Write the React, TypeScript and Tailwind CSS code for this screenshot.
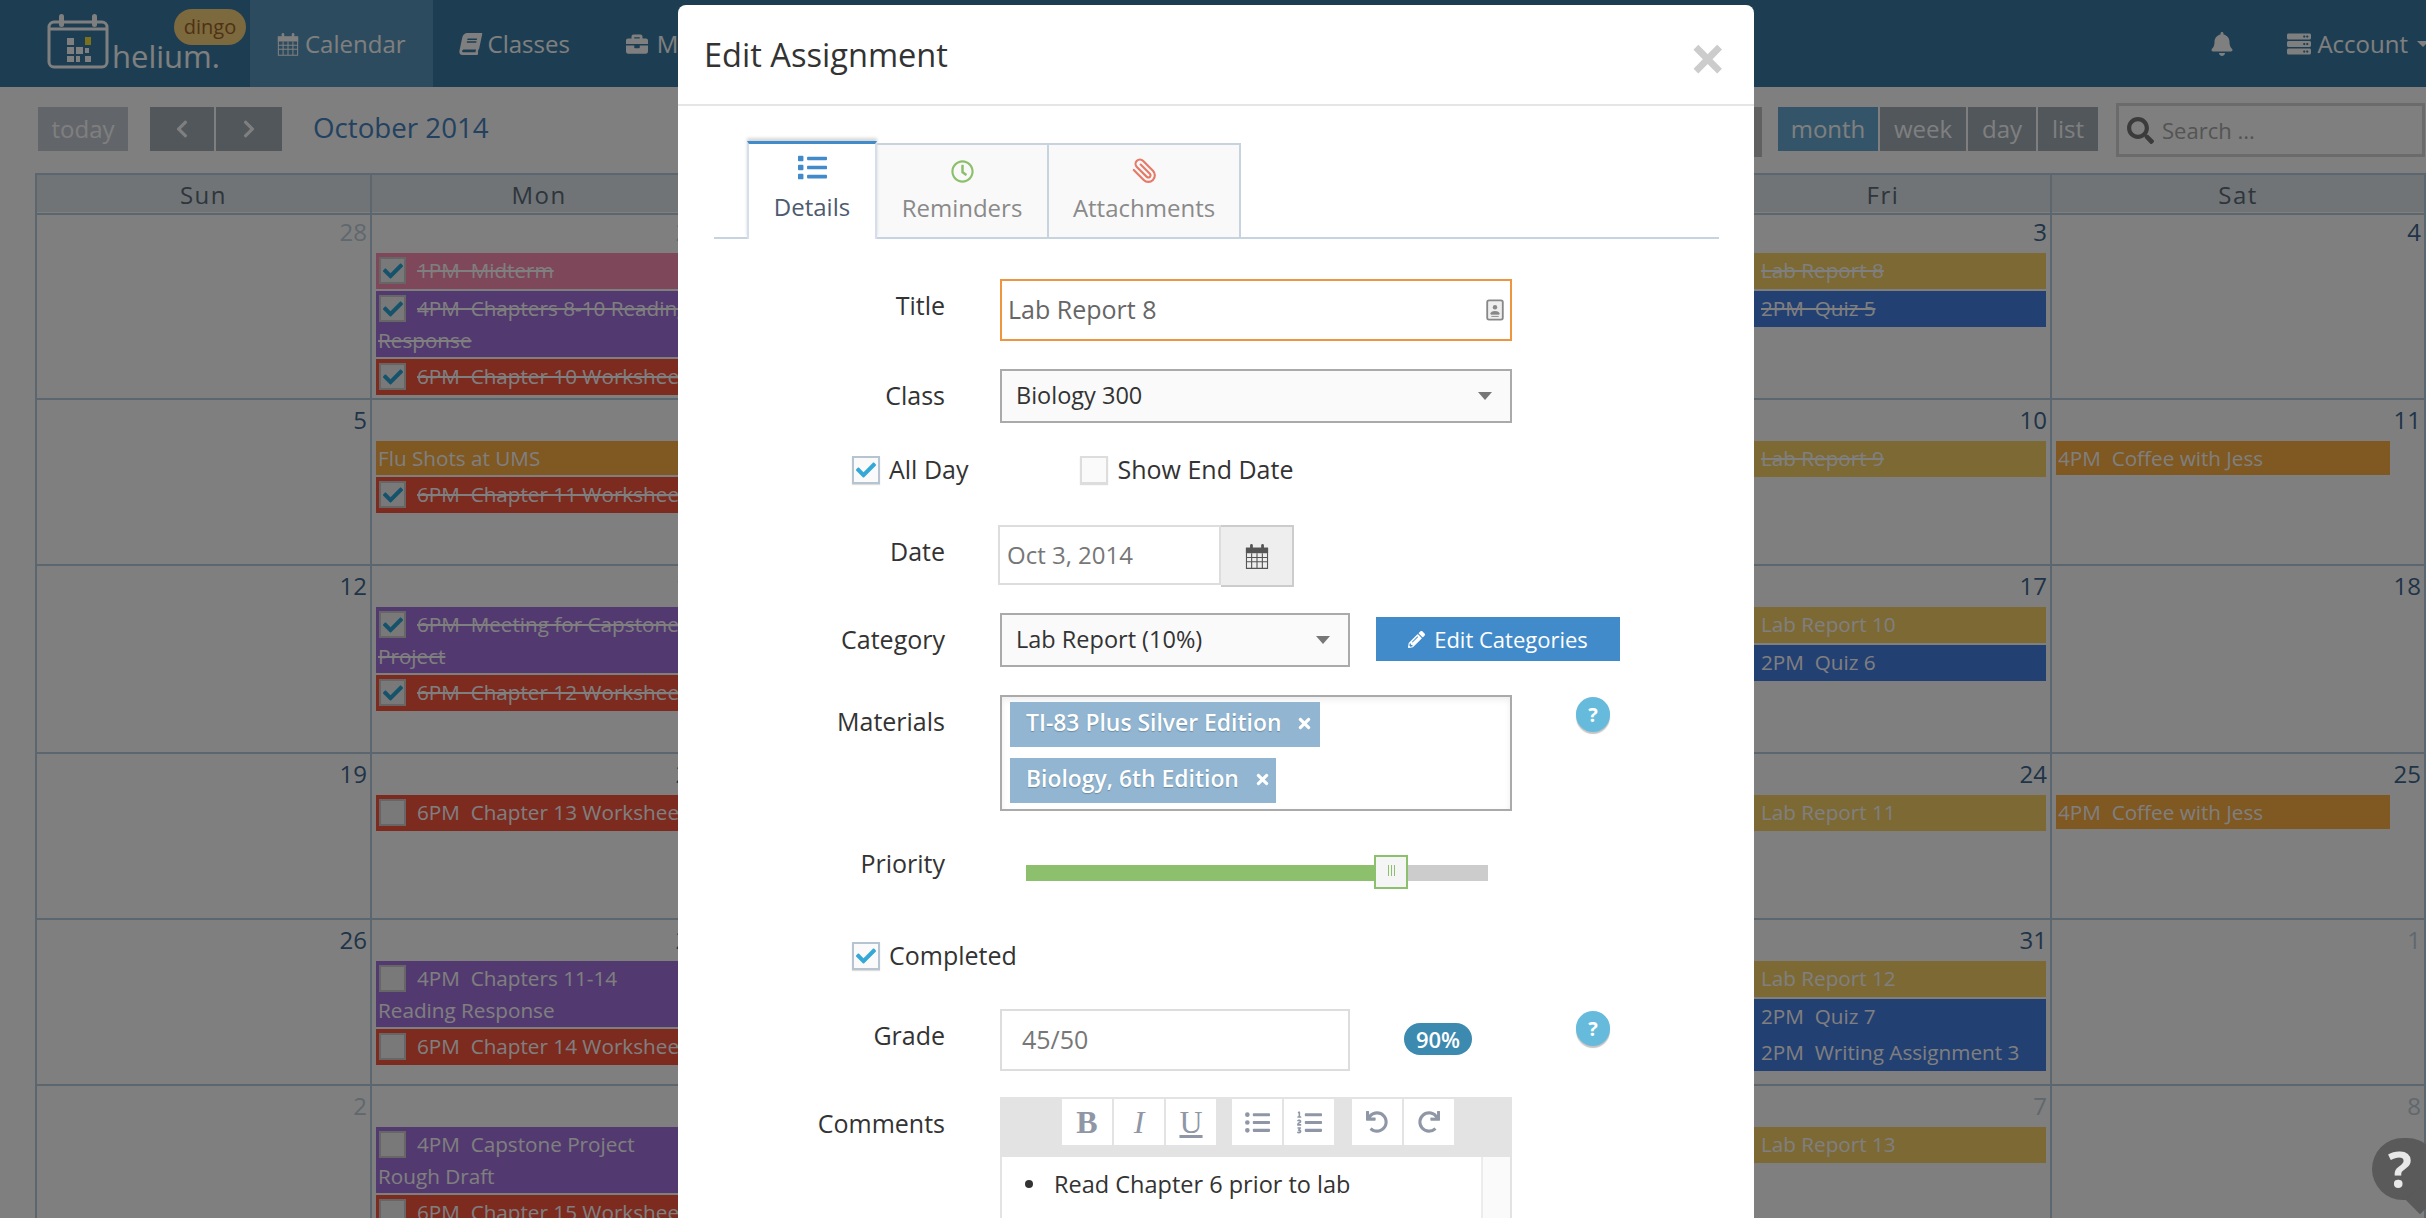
import React from 'react';
import {
  FaBell,
  FaBook,
  FaBriefcase,
  FaCheck,
  FaChevronLeft,
  FaChevronRight,
  FaList,
  FaListOl,
  FaListUl,
  FaPencilAlt,
  FaRedo,
  FaRegClock,
  FaSearch,
  FaServer,
  FaTimes,
  FaUndo,
} from 'react-icons/fa';
import { FiPaperclip } from 'react-icons/fi';

// --- CALENDAR DATA ---
interface CalEvent {
  text: string;
  color: string;
  box?: boolean;
  done?: boolean;
  joined?: boolean;
  short?: boolean;
}

interface Cell {
  day: number;
  muted?: boolean;
  events?: CalEvent[];
}

const PINK = 'bg-[#fe8eb4]';
const PURPLE = 'bg-[#a474e0]';
const RED = 'bg-[#fa543e]';
const YELLOW = 'bg-[#fad268]';
const ORANGE = 'bg-[#feb044]';
const BLUE = 'bg-[#4680e6]';

const weeks: { height: string; cells: Cell[] }[] = [
  {
    height: 'h-[188px]',
    cells: [
      { day: 28, muted: true },
      {
        day: 29,
        muted: true,
        events: [
          { text: '1PM\u00a0\u00a0Midterm', color: PINK, box: true, done: true },
          { text: '4PM\u00a0\u00a0Chapters 8-10 Reading Response', color: PURPLE, box: true, done: true },
          { text: '6PM\u00a0\u00a0Chapter 10 Worksheet', color: RED, box: true, done: true },
        ],
      },
      { day: 30, muted: true },
      { day: 1 },
      { day: 2 },
      {
        day: 3,
        events: [
          { text: 'Lab Report 8', color: YELLOW, box: true, done: true },
          { text: '2PM\u00a0\u00a0Quiz 5', color: BLUE, box: true, done: true },
        ],
      },
      { day: 4 },
    ],
  },
  {
    height: 'h-[166px]',
    cells: [
      { day: 5 },
      {
        day: 6,
        events: [
          { text: 'Flu Shots at UMS', color: ORANGE },
          { text: '6PM\u00a0\u00a0Chapter 11 Worksheet', color: RED, box: true, done: true },
        ],
      },
      { day: 7 },
      { day: 8 },
      { day: 9 },
      { day: 10, events: [{ text: 'Lab Report 9', color: YELLOW, box: true, done: true }] },
      { day: 11, events: [{ text: '4PM\u00a0\u00a0Coffee with Jess', color: ORANGE, short: true }] },
    ],
  },
  {
    height: 'h-[188px]',
    cells: [
      { day: 12 },
      {
        day: 13,
        events: [
          { text: '6PM\u00a0\u00a0Meeting for Capstone Project', color: PURPLE, box: true, done: true },
          { text: '6PM\u00a0\u00a0Chapter 12 Worksheet', color: RED, box: true, done: true },
        ],
      },
      { day: 14 },
      { day: 15 },
      { day: 16 },
      {
        day: 17,
        events: [
          { text: 'Lab Report 10', color: YELLOW, box: true },
          { text: '2PM\u00a0\u00a0Quiz 6', color: BLUE, box: true },
        ],
      },
      { day: 18 },
    ],
  },
  {
    height: 'h-[166px]',
    cells: [
      { day: 19 },
      { day: 20, events: [{ text: '6PM\u00a0\u00a0Chapter 13 Worksheet', color: RED, box: true }] },
      { day: 21 },
      { day: 22 },
      { day: 23 },
      { day: 24, events: [{ text: 'Lab Report 11', color: YELLOW, box: true }] },
      { day: 25, events: [{ text: '4PM\u00a0\u00a0Coffee with Jess', color: ORANGE, short: true }] },
    ],
  },
  {
    height: 'h-[166px]',
    cells: [
      { day: 26 },
      {
        day: 27,
        events: [
          { text: '4PM\u00a0\u00a0Chapters 11-14 Reading Response', color: PURPLE, box: true },
          { text: '6PM\u00a0\u00a0Chapter 14 Worksheet', color: RED, box: true },
        ],
      },
      { day: 28 },
      { day: 29 },
      { day: 30 },
      {
        day: 31,
        events: [
          { text: 'Lab Report 12', color: YELLOW, box: true },
          { text: '2PM\u00a0\u00a0Quiz 7', color: BLUE, box: true },
          { text: '2PM\u00a0\u00a0Writing Assignment 3', color: BLUE, box: true, joined: true },
        ],
      },
      { day: 1, muted: true },
    ],
  },
  {
    height: 'h-[166px]',
    cells: [
      { day: 2, muted: true },
      {
        day: 3,
        muted: true,
        events: [
          { text: '4PM\u00a0\u00a0Capstone Project Rough Draft', color: PURPLE, box: true },
          { text: '6PM\u00a0\u00a0Chapter 15 Worksheet', color: RED, box: true },
        ],
      },
      { day: 4, muted: true },
      { day: 5, muted: true },
      { day: 6, muted: true },
      { day: 7, muted: true, events: [{ text: 'Lab Report 13', color: YELLOW, box: true }] },
      { day: 8, muted: true },
    ],
  },
];

const dayNames = ['Sun', 'Mon', 'Tue', 'Wed', 'Thu', 'Fri', 'Sat'];

// the old font-awesome calendar: solid head, rings, open grid
function CalendarIcon({ className }: { className?: string }) {
  return (
    <svg viewBox="0 0 26 28" className={className} fill="currentColor">
      <path d="M1 5h24v6H1z" />
      <rect x="5.5" y="1" width="3" height="6" rx="1.5" />
      <rect x="17.5" y="1" width="3" height="6" rx="1.5" />
      <path
        d="M1.6 5.6h22.8v21.8H1.6zM7.2 11v16M13 11v16M18.8 11v16M2 15.6h22M2 20.2h22"
        fill="none"
        stroke="currentColor"
        strokeWidth="1.2"
      />
    </svg>
  );
}

function Logo() {
  return (
    <div className="relative h-[87px] w-[250px] shrink-0">
      <svg viewBox="0 0 62 56" className="absolute left-[47px] top-[13px] h-[56px] w-[62px]" fill="none">
        <rect x="2" y="9" width="58" height="45" rx="5" stroke="#fff" strokeWidth="3" />
        <path d="M2 16h58" stroke="#fff" strokeWidth="3" />
        <rect x="12" y="1" width="5" height="13" rx="2.5" fill="#fff" />
        <rect x="45" y="1" width="5" height="13" rx="2.5" fill="#fff" />
        <rect x="20" y="25" width="7" height="7" fill="#fff" />
        <rect x="20" y="34" width="7" height="7" fill="#fff" />
        <rect x="20" y="43" width="7" height="6" fill="#fff" />
        <rect x="29" y="34" width="7" height="7" fill="#fff" />
        <rect x="38" y="43" width="6" height="6" fill="#fff" />
        <rect x="38" y="24" width="6" height="8" fill="#f4e23c" />
        <rect x="29" y="43" width="4" height="6" fill="#fff" />
        <rect x="38" y="35" width="4" height="5" fill="#fff" />
      </svg>
      <span className="absolute left-[112px] top-[36px] text-[31px] font-medium leading-[40px] text-white">helium.</span>
      <span className="absolute left-[174px] top-[9px] flex h-[36px] w-[72px] items-center justify-center rounded-full bg-[#f8d27c] text-[20px] text-[#a0642a]">
        dingo
      </span>
    </div>
  );
}

function Navbar() {
  return (
    <div className="flex h-[87px] items-center bg-[#3a7ca4] text-[24px] text-white">
      <Logo />
      <div className="flex h-full items-center gap-[6px] bg-[#5a96bc] px-[27px]">
        <CalendarIcon className="h-[24px] w-[22px]" />
        <span>Calendar</span>
      </div>
      <div className="flex h-full items-center gap-[7px] px-[27px]">
        <FaBook className="h-[22px] w-[21px] -skew-x-12" />
        <span>Classes</span>
      </div>
      <div className="flex h-full items-center gap-[8px] px-[28px]">
        <FaBriefcase className="h-[22px] w-[24px]" />
        <span>Materials</span>
      </div>
      <div className="ml-auto -mr-[3px] flex items-center">
        <FaBell className="h-[24px] w-[22px]" />
        <FaServer className="ml-[54px] h-[24px] w-[24px]" />
        <span className="ml-[6px]">Account</span>
        <span className="ml-[9px] h-0 w-0 border-x-[6px] border-t-[6px] border-x-transparent border-t-white" />
      </div>
    </div>
  );
}

function Toolbar() {
  const btn = 'flex h-[44px] items-center justify-center text-[24px] text-white';
  return (
    <div className="flex h-[86px] items-start justify-between pl-[38px] pt-[20px]">
      <div className="flex items-start">
        <button className={`${btn} w-[90px] bg-[#c4ccd4]`}>today</button>
        <button className={`${btn} ml-[22px] w-[64px] bg-[#a4aeb8]`}>
          <FaChevronLeft size={20} />
        </button>
        <button className={`${btn} ml-[2px] w-[66px] bg-[#a4aeb8]`}>
          <FaChevronRight size={20} />
        </button>
        <h2 className="ml-[31px] text-[27.7px] leading-[40px] text-[#4682c0]">October 2014</h2>
      </div>
      <div className="flex items-start">
        <button className="h-[50px] w-[8px] bg-[#c0c0c0]" />
        <button className={`${btn} ml-[16px] w-[100px] bg-[#68aad2]`}>month</button>
        <button className={`${btn} ml-[2px] w-[86px] bg-[#a4aeb8]`}>week</button>
        <button className={`${btn} ml-[2px] w-[68px] bg-[#a4aeb8]`}>day</button>
        <button className={`${btn} ml-[2px] w-[60px] bg-[#a4aeb8]`}>list</button>
        <div className="ml-[18px] mr-[1px] -mt-[4px] flex h-[54px] w-[309px] items-center border-[3px] border-[#d6d6d6] pl-[8px] text-[22px] text-[#a8a8a8]">
          <FaSearch className="h-[27px] w-[27px] text-[#777]" />
          <span className="ml-[8px]">Search ...</span>
        </div>
      </div>
    </div>
  );
}

function EventBox({ done }: { done?: boolean }) {
  // overflow-hidden keeps the baseline at the box bottom, with or without the check
  return (
    <span className="mr-[11px] ml-[1px] inline-block h-[27px] w-[27px] overflow-hidden border-[2px] border-[#cccccc] bg-[#f2f2f2] align-[-6px]">
      {done && (
        <span className="flex h-full items-center justify-center">
          <FaCheck size={20} className="text-[#2ba7d8]" />
        </span>
      )}
    </span>
  );
}

function Event({ ev }: { ev: CalEvent }) {
  return (
    <div
      className={`${ev.color} ${ev.joined ? '' : 'mt-[2px]'} ${ev.short ? 'mr-[30px]' : ''} ${
        ev.box ? 'min-h-[36px]' : ''
      } px-[2px] py-[1px] text-[20.7px] leading-[32px] text-white ${ev.done ? 'line-through' : ''}`}
    >
      {ev.box && <EventBox done={ev.done} />}
      {ev.text}
    </div>
  );
}

function CalendarGrid() {
  return (
    <div className="ml-[35px] border-l-2 border-t-2 border-[#b8ccdf]">
      <div className="grid h-[37px] grid-cols-[335px_336px_336px_336px_336px_336px_374px] bg-[#e0e8ee]">
        {dayNames.map((name) => (
          <div
            key={name}
            className="flex items-center justify-center border-b-2 border-r-2 border-[#b8ccdf] pt-[2px] text-[24px] tracking-[1.5px] text-[#5c6c78]"
          >
            {name}
          </div>
        ))}
      </div>
      {weeks.map((week, i) => (
        <div key={i} className={`${week.height} grid grid-cols-[335px_336px_336px_336px_336px_336px_374px]`}>
          {week.cells.map((cell, j) => (
            <div key={j} className="min-h-0 border-b-2 border-r-2 border-[#b8ccdf] px-[4px]">
              <div
                className={`-mr-[1px] h-[39px] pt-[4px] text-right text-[24px] leading-[32px] ${
                  cell.muted ? 'text-[#bfd0dc]' : 'text-[#3e6890]'
                }`}
              >
                {cell.day}
              </div>
              {cell.events?.map((ev, k) => (
                <Event key={k} ev={ev} />
              ))}
            </div>
          ))}
        </div>
      ))}
    </div>
  );
}

// --- MODAL PIECES ---
function Label({ children }: { children: React.ReactNode }) {
  return <label className="w-[267px] shrink-0 pt-[9px] text-right leading-[34px]">{children}</label>;
}

function Arrow() {
  return <span className="h-0 w-0 border-x-[7px] border-t-[8px] border-x-transparent border-t-[#777]" />;
}

function Select({ value, className }: { value: string; className: string }) {
  return (
    <div
      className={`${className} flex h-[54px] items-center justify-between border-2 border-[#aaaaaa] bg-[#fafafa] pl-[14px] pr-[18px] text-[23.5px]`}
    >
      <span>{value}</span>
      <Arrow />
    </div>
  );
}

function Checkbox({ checked, label, className }: { checked?: boolean; label: string; className?: string }) {
  return (
    <div className={`flex items-center ${className ?? ''}`}>
      <span
        className={`flex h-[28px] w-[28px] items-center justify-center border-2 bg-[#fafafa] shadow-[0_1px_1px_#ddd] ${
          checked ? 'border-[#b6c3d1]' : 'border-[#dddddd]'
        }`}
      >
        {checked && <FaCheck size={20} className="text-[#34a8d6]" />}
      </span>
      <span className="ml-[9px]">{label}</span>
    </div>
  );
}

function HelpDot({ className }: { className: string }) {
  return (
    <span
      className={`${className} flex h-[35px] w-[34px] shrink-0 items-center justify-center rounded-full bg-[#66bbdc] text-[20px] font-bold text-white shadow-[0_2px_1px_#c4c4c4]`}
    >
      ?
    </span>
  );
}

function Chip({ text, className }: { text: string; className: string }) {
  return (
    <div
      className={`${className} flex h-[45px] items-center whitespace-nowrap bg-[#92b6d1] pb-[3px] pl-[16px] text-[22.9px] font-semibold text-white [text-shadow:0_1px_1px_#6a8ba5]`}
    >
      <span>{text}</span>
      <FaTimes size={17} className="ml-[15px] shrink-0" />
    </div>
  );
}

function TabButton({
  active,
  width,
  icon,
  label,
}: {
  active?: boolean;
  width: string;
  icon: React.ReactNode;
  label: string;
}) {
  return (
    <div
      className={`${width} flex flex-col items-center text-[24px] ${
        active
          ? 'relative z-10 -mb-[2px] h-[98px] border-x-2 border-t-[3px] border-x-[#d5deea] border-t-[#428bca] bg-white pt-[10px] text-[#4d5a70] shadow-[0_-3px_3px_#d8d8d8]'
          : 'mt-[2px] h-[94px] border-r-2 border-t-2 border-[#c8d3e0] bg-[#f9f9f9] pt-[13px] text-[#8a8a8a]'
      }`}
    >
      <span className="flex h-[26px] items-center">{icon}</span>
      <span className={`${active ? 'mt-[10px]' : 'mt-[7px]'} leading-[34px]`}>{label}</span>
    </div>
  );
}

function ToolButton({ children, className }: { children: React.ReactNode; className?: string }) {
  return (
    <span
      className={`${className ?? ''} flex h-[46px] w-[50px] items-center justify-center bg-white text-[#8f97a6]`}
    >
      {children}
    </span>
  );
}

function Modal() {
  const serif = "font-['Liberation_Serif',serif] text-[32px] leading-none";
  return (
    <div className="absolute left-[678px] top-[5px] h-[1300px] w-[1076px] rounded-[8px] bg-white text-[25px] text-[#333333]">
      <div className="flex h-[101px] items-start justify-between border-b-2 border-[#e5e5e5] pl-[26px] pr-[28px]">
        <h3 className="pt-[28px] text-[32.6px] leading-[44px]">Edit Assignment</h3>
        <span className="pt-[23px] text-[64px] font-bold leading-[60px] text-[#cccccc]">×</span>
      </div>

      <div className="ml-[36px] mt-[35px] flex h-[98px] w-[1005px] items-start border-b-2 border-[#c8d3e0] pl-[33px]">
        <TabButton active width="w-[130px]" label="Details" icon={<FaList size={29} className="text-[#428bca]" />} />
        <TabButton width="w-[172px]" label="Reminders" icon={<FaRegClock size={23} className="text-[#8dc06c]" />} />
        <TabButton
          width="w-[192px]"
          label="Attachments"
          icon={<FiPaperclip size={26} className="-scale-x-100 text-[#e57a68]" />}
        />
      </div>

      <div className="mt-[40px] flex items-start">
        <Label>Title</Label>
        <div className="ml-[55px] flex h-[62px] w-[512px] items-center justify-between border-2 border-[#f0953f] pl-[6px] pr-[5px] text-[#666666]">
          <span>Lab Report 8</span>
          <svg viewBox="0 0 20 24" className="h-[22px] w-[20px]" fill="none">
            <rect x="1.5" y="1.5" width="17" height="21" rx="2" stroke="#888" strokeWidth="2" fill="#eee" />
            <circle cx="10" cy="9" r="2.4" fill="#888" />
            <path d="M5.5 15.5c0-2.4 9-2.4 9 0v1h-9zM6 19h8" fill="#888" stroke="#888" />
          </svg>
        </div>
      </div>

      <div className="mt-[28px] flex items-start">
        <Label>Class</Label>
        <Select value="Biology 300" className="ml-[55px] w-[512px]" />
      </div>

      <div className="ml-[174px] mt-[33px] flex h-[28px]">
        <Checkbox checked label="All Day" />
        <Checkbox label="Show End Date" className="ml-[112px]" />
      </div>

      <div className="mt-[41px] flex items-start">
        <Label>Date</Label>
        <div className="ml-[53px] flex items-start">
          <div className="flex h-[60px] w-[223px] items-center border-2 border-[#dddddd] pl-[7px] text-[24px] text-[#777777]">
            Oct 3, 2014
          </div>
          <div className="flex h-[62px] w-[73px] items-center justify-center border-2 border-l-0 border-[#cccccc] bg-[#eeeeee]">
            <CalendarIcon className="h-[26px] w-[24px] text-[#555555]" />
          </div>
        </div>
      </div>

      <div className="mt-[26px] flex items-start">
        <Label>Category</Label>
        <Select value="Lab Report (10%)" className="ml-[55px] w-[350px]" />
        <button className="ml-[26px] mt-[4px] flex h-[44px] w-[244px] items-center justify-center gap-[9px] bg-[#428bca] text-[22px] text-white">
          <FaPencilAlt size={17} />
          Edit Categories
        </button>
      </div>

      <div className="mt-[28px] flex items-start">
        <Label>Materials</Label>
        <div className="ml-[55px] flex h-[116px] w-[512px] flex-col items-start border-2 border-[#aaaaaa] pl-[8px] pt-[5px] shadow-[inset_0_3px_6px_#eeeeee]">
          <Chip text="TI-83 Plus Silver Edition" className="w-[310px]" />
          <Chip text="Biology, 6th Edition" className="mt-[11px] w-[266px]" />
        </div>
        <HelpDot className="ml-[64px] mt-[2px]" />
      </div>

      <div className="mt-[36px] flex items-start">
        <Label>
          <span className="-mt-[10px] block">Priority</span>
        </Label>
        <div className="relative ml-[81px] mt-[18px] h-[16px] w-[462px] bg-[#cccccc]">
          <div className="h-full w-[350px] bg-[#8dc06c]" />
          <div className="absolute left-[348px] -top-[10px] flex h-[34px] w-[34px] items-center justify-center gap-[2px] border-2 border-[#8dc06c] bg-[#f5f5f5] pb-[3px]">
            <span className="h-[11px] w-[1px] bg-[#8dc06c]" />
            <span className="h-[11px] w-[1px] bg-[#8dc06c]" />
            <span className="h-[11px] w-[1px] bg-[#8dc06c]" />
          </div>
        </div>
      </div>

      <div className="ml-[174px] mt-[61px] flex h-[28px]">
        <Checkbox checked label="Completed" />
      </div>

      <div className="mt-[39px] flex items-start">
        <Label>Grade</Label>
        <div className="ml-[55px] flex h-[62px] w-[350px] items-center border-2 border-[#dddddd] pl-[20px] text-[#777777]">
          45/50
        </div>
        <span className="ml-[54px] mt-[14px] flex h-[32px] w-[68px] items-center justify-center rounded-full bg-[#3d8ab0] text-[22px] font-semibold text-white">
          90%
        </span>
        <HelpDot className="ml-[104px] mt-[2px]" />
      </div>

      <div className="mt-[26px] flex items-start">
        <Label>Comments</Label>
        <div className="ml-[55px] w-[512px]">
          <div className="flex h-[60px] items-start bg-[#e3e3e3] pl-[62px] pt-[2px]">
            <ToolButton className={`${serif} font-bold`}>B</ToolButton>
            <ToolButton className={`${serif} ml-[2px] italic`}>I</ToolButton>
            <ToolButton className={`${serif} ml-[2px] underline`}>U</ToolButton>
            <ToolButton className="ml-[16px]">
              <FaListUl size={25} />
            </ToolButton>
            <ToolButton className="ml-[2px]">
              <FaListOl size={25} />
            </ToolButton>
            <ToolButton className="ml-[18px]">
              <FaUndo size={22} />
            </ToolButton>
            <ToolButton className="ml-[2px]">
              <FaRedo size={22} />
            </ToolButton>
          </div>
          <div className="flex h-[120px] border-x-2 border-[#e3e3e3]">
            <div className="flex flex-1 items-start pl-[23px] pt-[9px] text-[23.5px] leading-[36px]">
              <span className="mt-[14px] h-[8px] w-[8px] rounded-full bg-[#333333]" />
              <span className="ml-[21px]">Read Chapter 6 prior to lab</span>
            </div>
            <div className="w-[29px] border-l-2 border-[#ececec] bg-[#fafafa]" />
          </div>
        </div>
      </div>
    </div>
  );
}

export default function App() {
  return (
    <div className="relative h-[1218px] w-[2426px] overflow-hidden bg-white font-['Open_Sans',sans-serif]">
      <Navbar />
      <Toolbar />
      <CalendarGrid />
      <div className="absolute inset-0 bg-black/50" />
      <Modal />
      {/* support bubble, sits above the backdrop and is cut off by the window edge */}
      <div className="absolute left-[2372px] top-[1138px] flex h-[62px] w-[66px] items-center justify-start rounded-full bg-[#5a5a5a] pl-[16px] text-[50px] font-bold text-[#e8e8e8]">
        ?
      </div>
      <div className="absolute left-[2410px] top-[1190px] h-[20px] w-[20px] rotate-45 bg-[#5a5a5a]" />
    </div>
  );
}
